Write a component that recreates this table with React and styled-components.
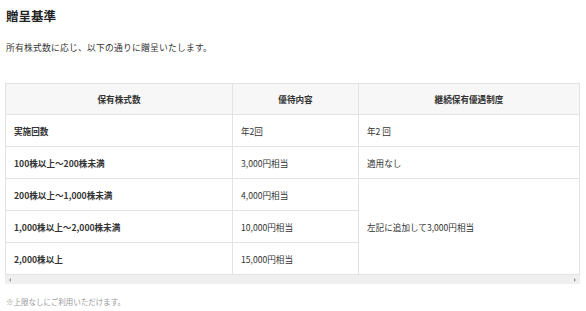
import React from "react";
import styled, { createGlobalStyle } from "styled-components";

const GlobalStyle = createGlobalStyle`
  html, body {
    margin: 0;
    padding: 0;
    background: #fff;
  }
  body {
    font-family: "Noto Sans CJK JP", "Noto Sans", sans-serif;
    color: #333;
  }
`;

const Page = styled.div`
  width: 586px;
  height: 311px;
  padding: 6px 6px 0 5px;
  box-sizing: border-box;
`;

const Heading = styled.h2`
  margin: 0 0 0 1px;
  font-size: 12.5px;
  line-height: 20px;
  font-weight: 700;
  color: #222;
`;

const Lead = styled.p`
  margin: 12px 0 0 1px;
  font-size: 8.8px;
  line-height: 20px;
  letter-spacing: 0.2px;
  color: #333;
`;

const TableWrap = styled.div`
  margin-top: 25px;
  width: 575px;
`;

const Table = styled.table`
  width: 100%;
  border-collapse: collapse;
  table-layout: fixed;
  font-size: 8.6px;
`;

const Th = styled.th`
  background: #f7f7f7;
  border: 1px solid #e3e3e3;
  height: 30px;
  padding: 0;
  font-weight: 700;
  text-align: center;
  color: #333;
`;

const Td = styled.td`
  border: 1px solid #e3e3e3;
  height: 31px;
  padding: 0 0 0 8px;
  font-weight: ${(p) => (p.$bold ? 700 : 400)};
  color: #333;
  background: #fff;
  vertical-align: middle;
`;

const ScrollBar = styled.div`
  height: 9px;
  background: #efefef;
  display: flex;
  align-items: center;
  justify-content: space-between;
  padding: 0 4px;
`;

const Arrow = styled.span`
  width: 0;
  height: 0;
  border-top: 2px solid transparent;
  border-bottom: 2px solid transparent;
  ${(p) =>
    p.$dir === "left"
      ? "border-right: 2px solid #999;"
      : "border-left: 2px solid #999;"}
`;

const Note = styled.p`
  margin: 12px 0 0 1px;
  font-size: 7.5px;
  line-height: 12px;
  color: #999;
`;

const rows = [
  { label: "実施回数", value: "年2回", extra: "年2 回" },
  { label: "100株以上～200株未満", value: "3,000円相当", extra: "適用なし" },
  { label: "200株以上～1,000株未満", value: "4,000円相当", extra: "左記に追加して3,000円相当", span: 3 },
  { label: "1,000株以上～2,000株未満", value: "10,000円相当" },
  { label: "2,000株以上", value: "15,000円相当" },
];

export default function App() {
  return (
    <>
      <GlobalStyle />
      <Page>
        <Heading>贈呈基準</Heading>
        <Lead>所有株式数に応じ、以下の通りに贈呈いたします。</Lead>
        <TableWrap>
          <Table>
            <colgroup>
              <col style={{ width: "227px" }} />
              <col style={{ width: "126px" }} />
              <col />
            </colgroup>
            <thead>
              <tr>
                <Th>保有株式数</Th>
                <Th>優待内容</Th>
                <Th>継続保有優遇制度</Th>
              </tr>
            </thead>
            <tbody>
              {rows.map((r) => (
                <tr key={r.label}>
                  <Td $bold>{r.label}</Td>
                  <Td>{r.value}</Td>
                  {r.extra && <Td rowSpan={r.span || 1}>{r.extra}</Td>}
                </tr>
              ))}
            </tbody>
          </Table>
          <ScrollBar>
            <Arrow $dir="left" />
            <Arrow $dir="right" />
          </ScrollBar>
        </TableWrap>
        <Note>※上限なしにご利用いただけます。</Note>
      </Page>
    </>
  );
}
